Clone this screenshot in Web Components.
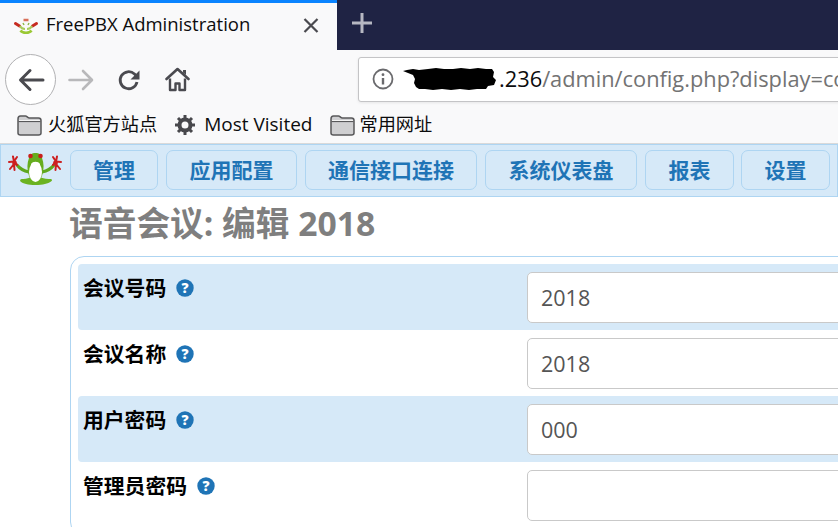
<!DOCTYPE html>
<html><head><meta charset="utf-8"><title>FreePBX Administration</title>
<style>
html,body{margin:0;padding:0;width:838px;height:527px;overflow:hidden;background:#fff}
body{font-family:"Open Sans","Noto Sans CJK SC",sans-serif}
</style></head><body>
<browser-tabs></browser-tabs>
<browser-toolbar></browser-toolbar>
<bookmark-bar></bookmark-bar>
<fpbx-nav>
  <nav-btn w="88">管理</nav-btn><nav-btn w="131">应用配置</nav-btn><nav-btn w="172">通信接口连接</nav-btn><nav-btn w="152">系统仪表盘</nav-btn><nav-btn w="89">报表</nav-btn><nav-btn w="89" style="margin-left:-1px">设置</nav-btn>
</fpbx-nav>
<conf-page>
  <form-row alt label="会议号码" value="2018"></form-row>
  <form-row label="会议名称" value="2018"></form-row>
  <form-row alt label="用户密码" value="000"></form-row>
  <form-row label="管理员密码" value=""></form-row>
</conf-page>
<script>
const FROG=`<path d="M21 22C16 21 12 19 9 15M34 22C39 21 43 19 46 15" stroke="#5fa81f" stroke-width="3" fill="none" stroke-linecap="round"/>
<path d="M14 29c4 .5 8-2 13.500-2s10 2.500 14.500 2c2 0 3 1 1 2.500-3 2-8 3.500-15.500 3.500s-12.500-1.500-15-3.500c-1-1.500 0-2.500 1.500-2.500z" fill="#6bb321"/>
<path d="M21 8c0-3 3-5 6.500-5s6.500 2 6.500 5c2 5 2 11 .5 16-1 5-3.500 7-7 7s-6-2-7-7c-1.500-5-1.500-11 .5-16z" fill="#66ad1f"/>
<ellipse cx="27.500" cy="22" rx="6.500" ry="10" fill="#fff"/>
<path d="M23 14c2-3 7-3 9 0l-.5 5h-8z" fill="#fff"/>
<circle cx="22.500" cy="6" r="2.300" fill="#c8201c"/><circle cx="32.500" cy="6" r="2.300" fill="#c8201c"/>
<path d="M9 15L6 11.500 1 12M6 11.500L5 6.500M6 11.500L9 7M6 14L2 19M6 13.500L6.500 20M45 15l3-3.500 5 .5M48 11.500l1-5M48 11.500L45 7M48 14l4 5M48 13.500L47.500 20" stroke="#cc2020" stroke-width="2" fill="none" stroke-linecap="round"/>
<circle cx="6.500" cy="13" r="2.400" fill="#cc2020"/><circle cx="47.500" cy="13" r="2.400" fill="#cc2020"/>`;
function def(name,css,html){
  customElements.define(name,class extends HTMLElement{
    connectedCallback(){
      if(this.shadowRoot)return;
      const r=this.attachShadow({mode:'open'});
      r.innerHTML=`<style>${css}</style>`+(typeof html==='function'?html(this):html);
    }
  });
}
const FOLDER=`<svg width="25" height="21" viewBox="0 0 25 21"><path d="M1 4c0-1.500 1-3 2.500-3h5c1.500 0 2 2 4 2h9c1.500 0 2.500 1 2.500 2.500V18c0 1.500-1 2-2.500 2h-18C2 20 1 19.500 1 18z" fill="#cfcfd1" stroke="#58585a" stroke-width="1.500"/><path d="M1.500 6.500h22" stroke="#58585a" stroke-width="1.200"/><path d="M2 5.500h21" stroke="#f4f4f4" stroke-width="1"/></svg>`;
def('browser-tabs',`:host{display:flex;height:50px;background:#1f2344}
.tab{width:337px;box-sizing:border-box;border-top:3px solid #0a84ff;background:#f9f9fa;display:flex;align-items:center;padding:0 0 4px 13px;color:#0c0c0d;font:20px/28px "Open Sans","Noto Sans",sans-serif}
.fav{margin-right:7px;display:block}
.title{flex:1;font-size:18.500px;white-space:nowrap;margin-top:-2px}
.x{margin-right:18px;display:block}
.plus{margin:-4px 0 0 14px;align-self:center;display:block}`,
`<div class="tab"><svg class="fav" width="26" height="20" viewBox="0 0 26 20"><path d="M2.500 8.500l4 2.500M23.500 8.500l-4 2.500" stroke="#c62a20" stroke-width="3" stroke-linecap="round"/><path d="M7 11c1 2 3 3 5 3M19 11c-1 2-3 3-5 3" stroke="#a8cc5c" stroke-width="2" fill="none"/><path d="M7.500 15.500c2 3 9 3 11 0" stroke="#9ac833" stroke-width="2.600" fill="none"/><path d="M10.500 5h5" stroke="#d8705a" stroke-width="2.500"/><path d="M10 8l1 2M16 8l-1 2" stroke="#8fb94a" stroke-width="1.500"/></svg><span class="title">FreePBX Administration</span><svg class="x" width="16" height="16" viewBox="0 0 16 16"><path d="M1.500 2l13 13M14.500 2l-13 13" stroke="#4a4a4f" stroke-width="2.200"/></svg></div>
<svg class="plus" width="22" height="22" viewBox="0 0 22 22"><path d="M11 1v20M1 11h20" stroke="#b6b7c2" stroke-width="3"/></svg>`);
def('browser-toolbar',`:host{display:flex;align-items:center;height:55px;background:#f9f9fa;padding-left:5px;box-sizing:border-box;overflow:hidden}
.back{width:51px;height:51px;box-sizing:border-box;border:1px solid #b1b1b3;border-radius:50%;background:#fff;display:flex;align-items:center;justify-content:center;flex:none;margin-top:4px}
.ic{width:48px;display:flex;justify-content:center;flex:none;margin-top:4px}
.ic svg,.back svg{display:block}
.bar{flex:none;width:520px;height:45px;box-sizing:border-box;margin:3px 0 0 0;border:1px solid #c4c4c6;border-radius:3px;background:#fff;box-shadow:0 1px 3px rgba(0,0,0,.08);display:flex;align-items:center;padding-left:13px;font:21.800px/30px "Open Sans","Noto Sans",sans-serif;color:#737373;white-space:nowrap}
.blob{display:block;margin:0 -3px 0 8px;flex:none}
b{font-weight:400;color:#0c0c0d}`,
`<div class="back"><svg width="28" height="26" viewBox="0 0 28 26"><path d="M26 13H4M13 3.500L3.500 13l9.500 9.500" stroke="#4a4a4f" stroke-width="3" fill="none" stroke-linecap="round" stroke-linejoin="round"/></svg></div>
<div class="ic" style="width:49px"><svg width="26" height="26" viewBox="0 0 26 26"><path d="M1.500 13h22M15 4l9 9-9 9" stroke="#b8b8ba" stroke-width="2.600" fill="none" stroke-linecap="round" stroke-linejoin="round"/></svg></div>
<div class="ic"><svg width="24" height="24" viewBox="0 0 24 24"><path d="M20 14a8.500 8.500 0 1 1-2.500-8L21 9.500" stroke="#4a4a4f" stroke-width="2.800" fill="none"/><path d="M22.500 2.500v9h-9z" fill="#4a4a4f"/></svg></div>
<div class="ic" style="width:48px;margin-right:157px"><svg width="25" height="25" viewBox="0 0 25 25"><path d="M1.500 12L12.500 2l11 10" stroke="#4a4a4f" stroke-width="2.600" fill="none" stroke-linecap="round" stroke-linejoin="round"/><path d="M5 11.500V23h5.500v-6.500h4V23H20V11.500" stroke="#4a4a4f" stroke-width="2.400" fill="none" stroke-linejoin="round"/><path d="M18 3h3v5l-3-2.500z" fill="#4a4a4f"/></svg></div>
<div class="bar"><svg width="22" height="22" viewBox="0 0 22 22" style="display:block;flex:none"><circle cx="11" cy="11" r="9.500" fill="none" stroke="#6a6a6d" stroke-width="1.800"/><circle cx="11" cy="6.700" r="1.400" fill="#6a6a6d"/><path d="M11 10v6.500" stroke="#6a6a6d" stroke-width="2.400"/></svg><svg class="blob" width="100" height="24" viewBox="0 0 100 24"><path d="M1 4L5 3l6-1 6 1 9-1 8-1 8 1 9 0 8-1 9 1 8-1 8 1 6 0 2 3-1 5 3 3-2 5-6 1-2 3-9 0-8 1-9-1-9 1-9-1-9 1-8-1-6 0-3-2-2-4 1-4-2-4z" fill="#000"/></svg><b>.236</b>/admin/config.php?display=conferences</div>`);
def('bookmark-bar',`:host{display:flex;align-items:center;height:39px;background:#f9f9fa;padding:1px 0 0 17px;box-sizing:border-box;font:18.200px/24px "Open Sans","Noto Sans","Noto Sans CJK SC",sans-serif;color:#0c0c0d;white-space:nowrap}
svg{display:block;flex:none}
.t{margin:-2px 0 0 6px}`,
`${FOLDER}<span class="t">火狐官方站点</span><svg style="margin-left:17px" width="22" height="22" viewBox="0 0 22 22"><path d="M11 3.500a7.500 7.500 0 1 1 0 15 7.500 7.500 0 0 1 0-15zm0 4a3.500 3.500 0 1 0 0 7 3.500 3.500 0 0 0 0-7z" fill="#48484c" fill-rule="evenodd"/><path d="M11 1v4M11 17v4M1 11h4M17 11h4M4 4l3 3M15 15l3 3M18 4l-3 3M7 15l-3 3" stroke="#48484c" stroke-width="3"/></svg><span class="t" style="margin-left:8px;font-size:19px">Most Visited</span><span style="margin-left:18px">${FOLDER}</span><span class="t" style="margin-left:4px">常用网址</span>`);
def('fpbx-nav',`:host{display:flex;height:53px;box-sizing:border-box;background:#d6e9f8;border:1px solid #aed5f2;box-shadow:0 -1px 0 #d9d9d9;padding:5px 0 0 7px;overflow:hidden;gap:8px;align-items:flex-start;position:relative}
svg{display:block;flex:none}`,
`<svg width="54" height="38" viewBox="0 0 54 38">${FROG}</svg><slot></slot>`);
def('nav-btn',`:host{display:flex;flex:none;align-items:center;justify-content:center;height:40px;box-sizing:border-box;padding-bottom:2px;background:#d6e9f8;border:1px solid #aed5f2;border-radius:7px;color:#1f74b6;font:700 21px/28px "Noto Sans CJK SC","Open Sans",sans-serif;white-space:nowrap}`,
 t=>{t.style.width=t.getAttribute('w')+'px';return `<slot></slot>`});
def('conf-page',`:host{display:block;padding-left:70px;overflow:hidden;height:330px}
h1{margin:0 0 0 -1px;height:59px;box-sizing:border-box;padding-top:6px;font:700 33.700px/40px "Open Sans","Noto Sans CJK SC",sans-serif;color:#7f7f7f;white-space:nowrap}
.box{width:900px;box-sizing:border-box;border:1px solid #aed5f2;border-radius:14px;padding:7px}`,
`<h1>语音会议: 编辑 2018</h1><div class="box"><slot></slot></div>`);
def('form-row',`:host{display:flex;height:66px;box-sizing:border-box;padding:8px 0 0 5px;border-radius:4px;font:700 20.800px/28px "Noto Sans CJK SC","Open Sans",sans-serif;color:#000}
:host([alt]){background:#d6e9f8}
.l{width:444px;flex:none;display:flex;align-items:flex-start;gap:10px;padding-top:1px;box-sizing:border-box}
.l svg{display:block;margin-top:6px}
.i{width:400px;height:51px;box-sizing:border-box;border:1px solid #c9c9c9;border-radius:5px;background:#fff;padding:0 13px;font:400 21.500px/49px "Open Sans","Noto Sans",sans-serif;color:#555}`,
t=>`<div class="l"><span>${t.getAttribute('label')}</span><svg width="18" height="18" viewBox="0 0 18 18"><circle cx="9" cy="9" r="8.700" fill="#1f74b6"/><text x="9" y="14" text-anchor="middle" font-family="Open Sans" font-weight="800" font-size="14" fill="#fff">?</text></svg></div><div class="i">${t.getAttribute('value')}</div>`);
</script>
</body></html>
